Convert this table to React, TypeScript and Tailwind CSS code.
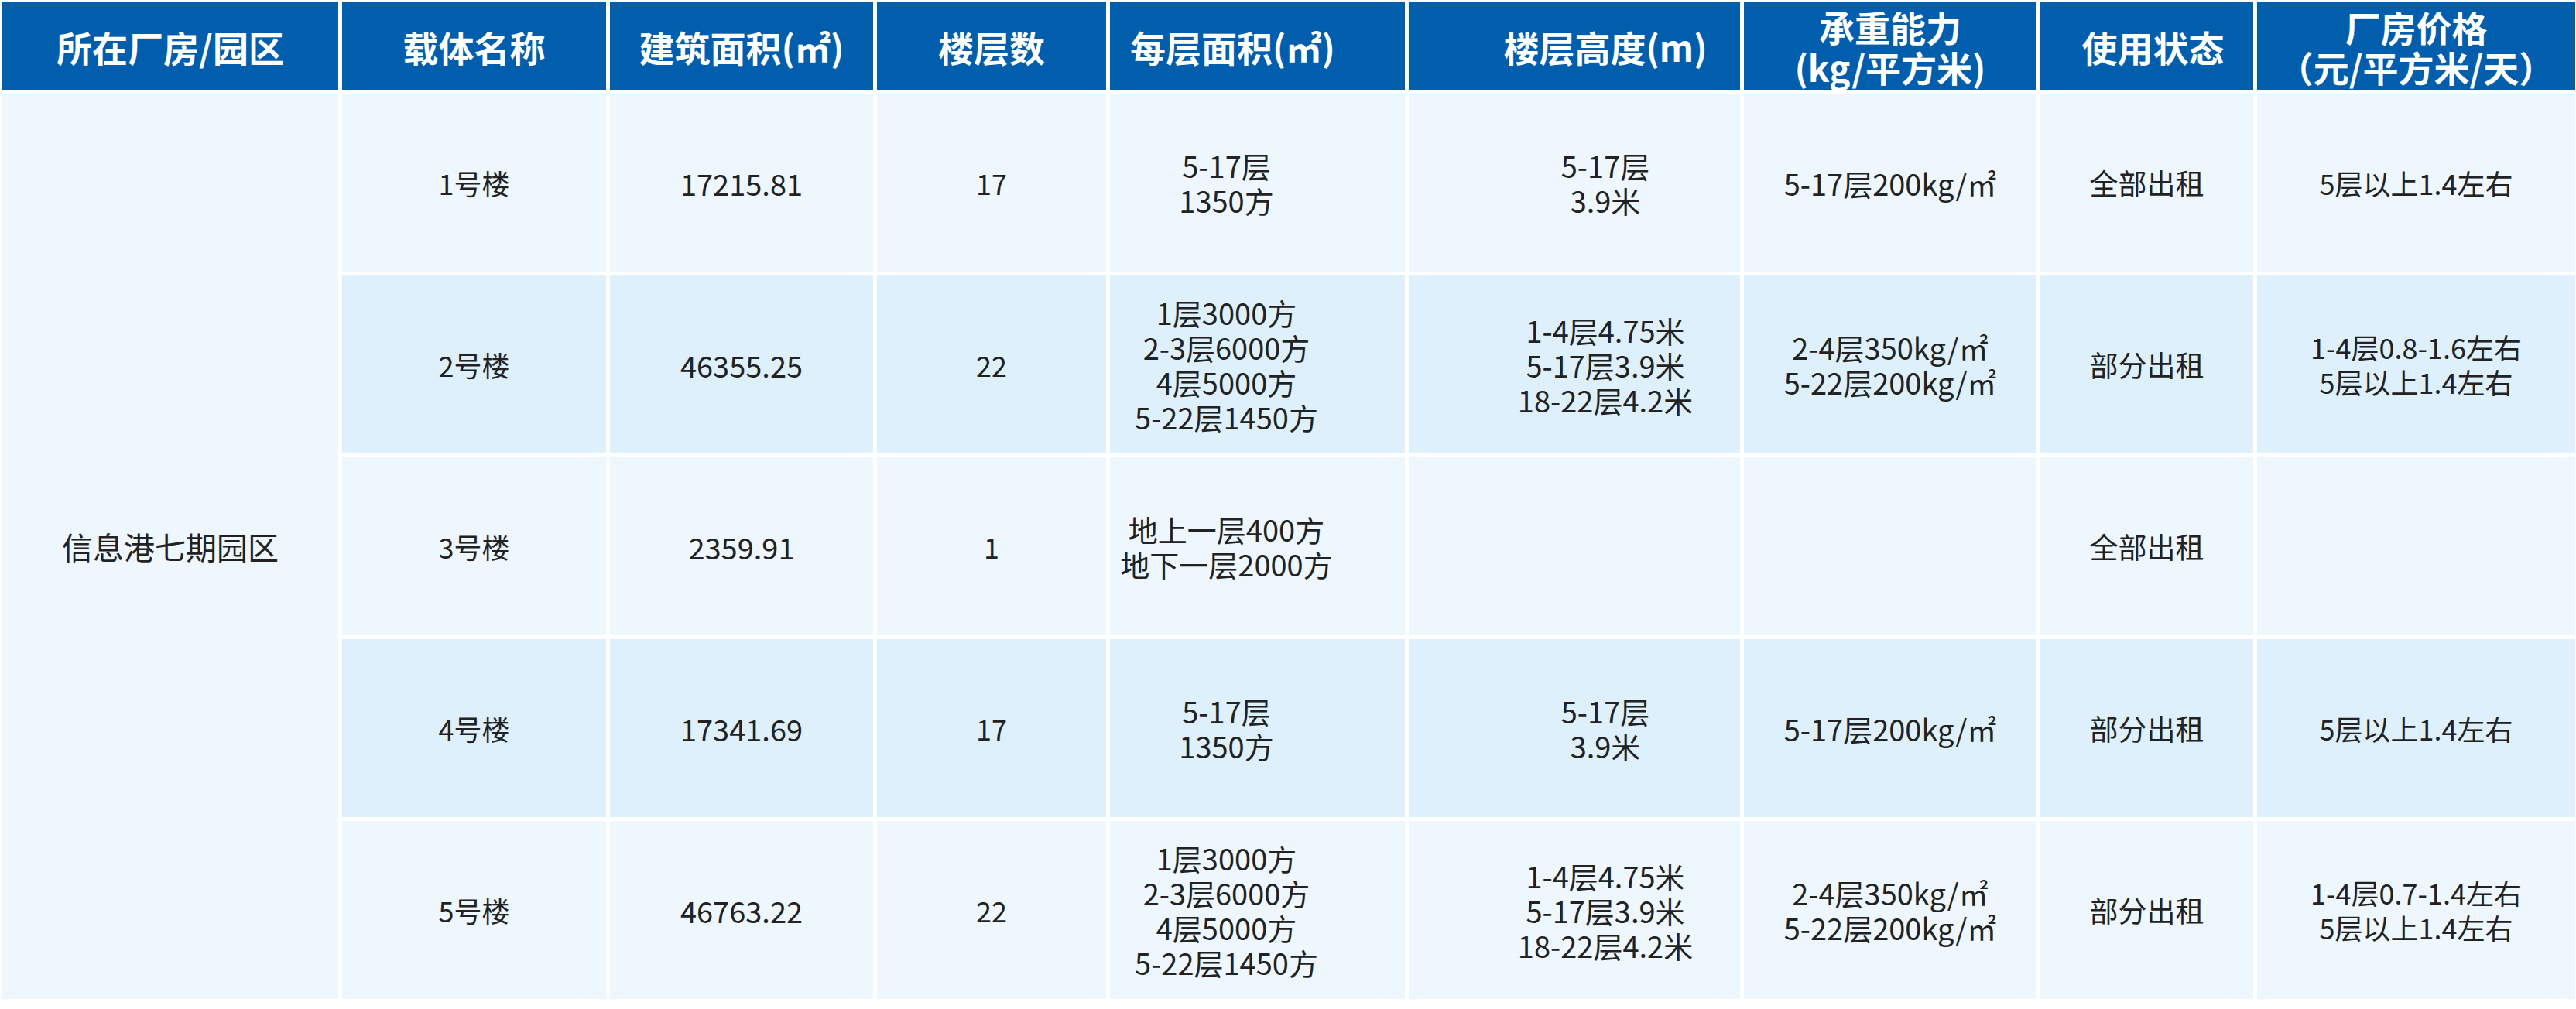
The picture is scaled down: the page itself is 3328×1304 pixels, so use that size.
const headers = [
  ["所在厂房/园区"],
  ["载体名称"],
  ["建筑面积(㎡)"],
  ["楼层数"],
  ["每层面积(㎡)"],
  ["楼层高度(m)"],
  ["承重能力", "(kg/平方米)"],
  ["使用状态"],
  ["厂房价格", "（元/平方米/天）"],
];

type Row = string[][];

const rows: Row[] = [
  [
    ["1号楼"],
    ["17215.81"],
    ["17"],
    ["5-17层", "1350方"],
    ["5-17层", "3.9米"],
    ["5-17层200kg/㎡"],
    ["全部出租"],
    ["5层以上1.4左右"],
  ],
  [
    ["2号楼"],
    ["46355.25"],
    ["22"],
    ["1层3000方", "2-3层6000方", "4层5000方", "5-22层1450方"],
    ["1-4层4.75米", "5-17层3.9米", "18-22层4.2米"],
    ["2-4层350kg/㎡", "5-22层200kg/㎡"],
    ["部分出租"],
    ["1-4层0.8-1.6左右", "5层以上1.4左右"],
  ],
  [
    ["3号楼"],
    ["2359.91"],
    ["1"],
    ["地上一层400方", "地下一层2000方"],
    [],
    [],
    ["全部出租"],
    [],
  ],
  [
    ["4号楼"],
    ["17341.69"],
    ["17"],
    ["5-17层", "1350方"],
    ["5-17层", "3.9米"],
    ["5-17层200kg/㎡"],
    ["部分出租"],
    ["5层以上1.4左右"],
  ],
  [
    ["5号楼"],
    ["46763.22"],
    ["22"],
    ["1层3000方", "2-3层6000方", "4层5000方", "5-22层1450方"],
    ["1-4层4.75米", "5-17层3.9米", "18-22层4.2米"],
    ["2-4层350kg/㎡", "5-22层200kg/㎡"],
    ["部分出租"],
    ["1-4层0.7-1.4左右", "5层以上1.4左右"],
  ],
];

// body columns 2..9 — a couple of them sit off-centre in the source, and the type size drifts a little
const cellCls = [
  "text-[36px]",
  "text-[38px]",
  "text-[36px]",
  "text-[38px] pr-[80px]",
  "text-[38px] pl-[80px]",
  "text-[38px]",
  "text-[37px]",
  "text-[36px]",
];
const headPad = ["", "", "", "", "pr-[64px]", "pl-[80px]", "", "pl-[16px]", ""];

export default function App() {
  return (
    <div
      className="w-[3328px] h-[1304px] bg-white pt-[3px] pl-[3px]"
      style={{ fontFamily: '"Noto Sans CJK SC", "Noto Sans", sans-serif' }}
    >
      <div className="grid grid-cols-[434px_341px_340px_296px_381px_428px_378px_275px_411px] grid-rows-[113px_repeat(5,230px)] gap-x-[5px] gap-y-[5px]">
        {/* Header */}
        {headers.map((lines, i) => (
          <div
            key={i}
            className={`flex flex-col items-center justify-center bg-[#005EAD] text-white font-bold text-[46px] leading-[52px] ${headPad[i]}`}
          >
            {lines.map((l) => (
              <span key={l}>{l}</span>
            ))}
          </div>
        ))}

        {/* Merged park column */}
        <div className="row-span-5 flex items-center justify-center bg-[#EEF7FD] text-[40px] text-[#222]">
          信息港七期园区
        </div>

        {rows.map((row, r) =>
          row.map((lines, c) => (
            <div
              key={`${r}-${c}`}
              className={`flex flex-col items-center justify-center leading-[45px] text-[#222] ${
                r % 2 === 1 ? "bg-[#DDF0FB]" : "bg-[#EEF7FD]"
              } ${cellCls[c]}`}
            >
              {lines.map((l) => (
                <span key={l}>{l}</span>
              ))}
            </div>
          ))
        )}
      </div>
    </div>
  );
}
